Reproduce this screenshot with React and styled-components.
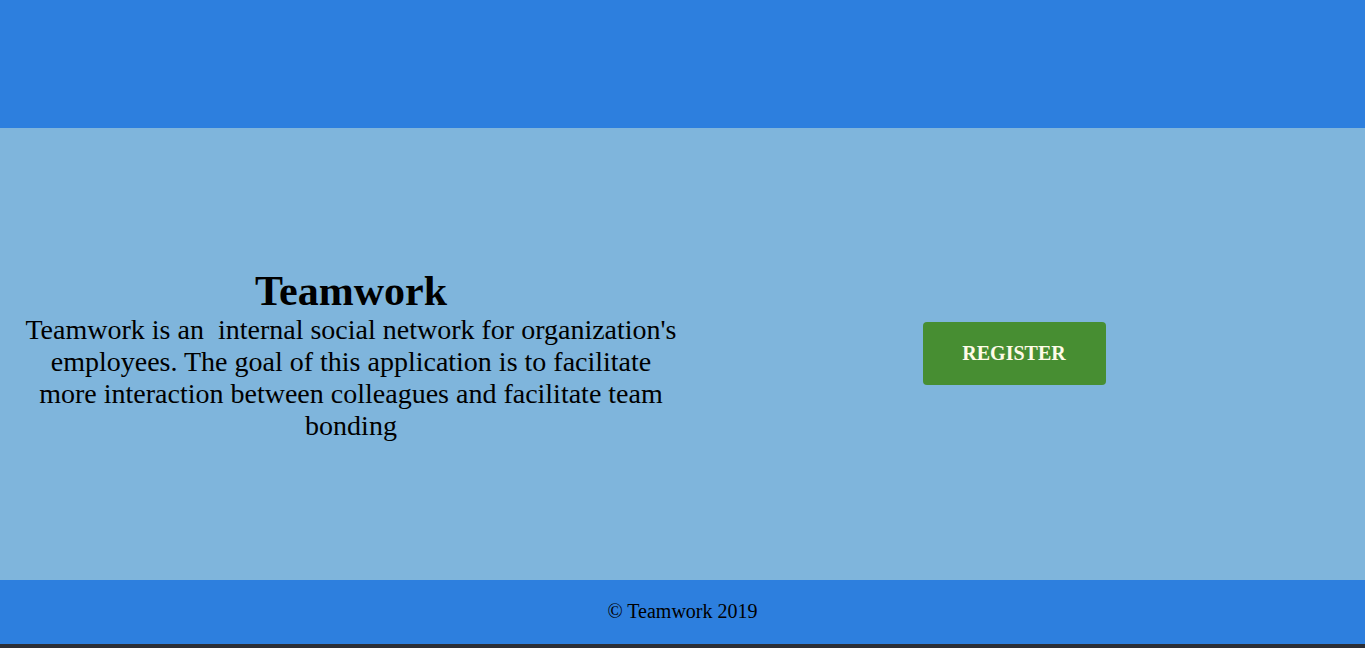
import React from "react";
import styled, { createGlobalStyle } from "styled-components";

const Global = createGlobalStyle`
  html, body { margin: 0; padding: 0; }
  body {
    background: #2b2e36;
    font-family: "Liberation Serif", "Times New Roman", serif;
    color: #000;
  }
`;

const Page = styled.div`
  display: flex;
  flex-direction: column;
  height: 644px;
`;

const Header = styled.header`
  height: 128px;
  background: #2d7fde;
  flex: none;
`;

const Main = styled.main`
  flex: 1;
  background: #7fb5dc;
  display: grid;
  grid-template-columns: 702px 624px;
  align-items: center;
`;

const Intro = styled.section`
  text-align: center;
  padding: 2px 24px 0;
`;

const Title = styled.h1`
  margin: 0;
  font-size: 42px;
  font-weight: bold;
  line-height: 46px;
`;

const Lead = styled.p`
  margin: 0;
  font-size: 28px;
  line-height: 32px;
`;

const Actions = styled.div`
  display: flex;
  justify-content: center;
`;

const Button = styled.button`
  width: 183px;
  height: 63px;
  border: none;
  border-radius: 4px;
  background: #478e32;
  color: #fffbe8;
  font-family: "Liberation Serif", "Times New Roman", serif;
  font-weight: bold;
  font-size: 20px;
  cursor: pointer;
  margin-top: -2px;
`;

const Footer = styled.footer`
  height: 64px;
  flex: none;
  background: #2d7fde;
  display: flex;
  align-items: center;
  justify-content: center;
  font-size: 20px;
  padding-bottom: 2px;
  box-sizing: border-box;
`;

export default function App() {
  return (
    <>
      <Global />
      <Page>
        <Header />
        <Main>
          <Intro>
            <Title>Teamwork</Title>
            <Lead>
              Teamwork is an {"\u00a0"}internal social network for organization's
              employees. The goal of this application is to facilitate more
              interaction between colleagues and facilitate team bonding
            </Lead>
          </Intro>
          <Actions>
            <Button>REGISTER</Button>
          </Actions>
        </Main>
        <Footer>© Teamwork 2019</Footer>
      </Page>
    </>
  );
}
